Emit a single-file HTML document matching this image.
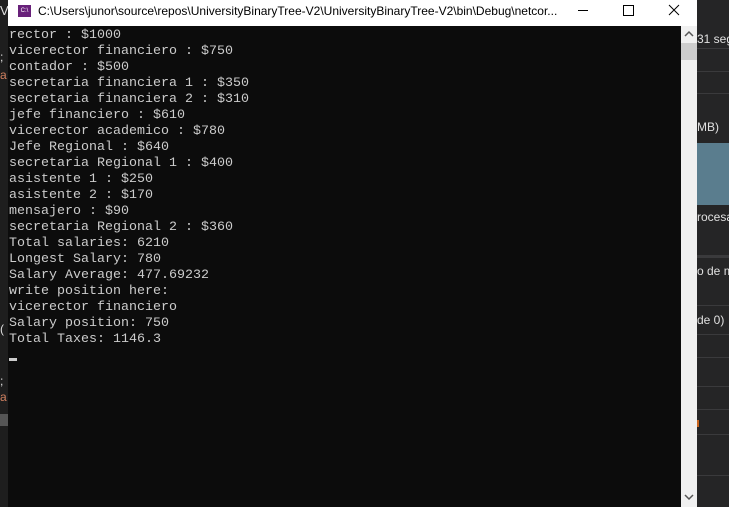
<!DOCTYPE html>
<html><head><style>
body{margin:0;width:729px;height:507px;overflow:hidden;background:#252526;position:relative;font-family:"Liberation Sans",sans-serif}
.abs{position:absolute}
.con{left:8px;top:26px;width:673px;height:481px;background:#0c0c0c}
pre{margin:0;position:absolute;left:1px;top:2px;font:13.33px/16px "Liberation Mono",monospace;color:#cccccc}
.rp{color:#e0e0e0;font-size:12px;white-space:nowrap}
.ln{background:#3a3a3c;height:1px;left:697px;width:32px}
.rpw{position:absolute;left:697px;top:0;width:32px;height:507px;overflow:hidden}
</style></head><body>
<div class="abs" style="left:0;top:0;width:8px;height:507px;background:#1e1e1e"></div>
<div class="abs" style="left:0;top:3px;color:#ddd;font-size:13px">V</div>
<div class="abs" style="left:0;top:50px;color:#ddd;font-size:12px">;</div>
<div class="abs" style="left:0;top:68px;color:#d08060;font-size:12px">a</div>
<div class="abs" style="left:0;top:322px;color:#ddd;font-size:12px">(</div>
<div class="abs" style="left:0;top:374px;color:#ddd;font-size:12px">;</div>
<div class="abs" style="left:0;top:390px;color:#d08060;font-size:12px">a</div>
<div class="abs" style="left:0;top:414px;width:8px;height:12px;background:#555"></div>
<div class="abs" style="left:8px;top:0;width:689px;height:26px;background:#fff"></div>
<div class="abs" style="left:18px;top:5px;width:13px;height:12px;background:#68217a;color:#fff;font-size:6px;line-height:12px;text-align:center">C:\</div>
<div class="abs" style="left:38px;top:4px;font-size:12px;color:#000;white-space:nowrap">C:\Users\junor\source\repos\UniversityBinaryTree-V2\UniversityBinaryTree-V2\bin\Debug\netcor...</div>
<div class="abs" style="left:578px;top:10px;width:10px;height:1px;background:#000"></div>
<div class="abs" style="left:623px;top:5px;width:9px;height:9px;border:1px solid #000"></div>
<svg class="abs" style="left:668px;top:4px" width="12" height="12"><path d="M1 1L11 11M11 1L1 11" stroke="#000" stroke-width="1"/></svg>
<div class="abs con"><pre>rector : $1000
vicerector financiero : $750
contador : $500
secretaria financiera 1 : $350
secretaria financiera 2 : $310
jefe financiero : $610
vicerector academico : $780
Jefe Regional : $640
secretaria Regional 1 : $400
asistente 1 : $250
asistente 2 : $170
mensajero : $90
secretaria Regional 2 : $360
Total salaries: 6210
Longest Salary: 780
Salary Average: 477.69232
write position here:
vicerector financiero
Salary position: 750
Total Taxes: 1146.3</pre>
<div class="abs" style="left:1px;top:332px;width:8px;height:3px;background:#ccc"></div></div>
<div class="abs" style="left:681px;top:26px;width:16px;height:481px;background:#f0f0f0"></div>
<div class="abs" style="left:681px;top:43px;width:16px;height:17px;background:#cdcdcd"></div>
<svg class="abs" style="left:684px;top:30px" width="10" height="8"><path d="M1 6L5 2L9 6" stroke="#555" fill="none" stroke-width="1.5"/></svg>
<svg class="abs" style="left:684px;top:493px" width="10" height="8"><path d="M1 2L5 6L9 2" stroke="#555" fill="none" stroke-width="1.5"/></svg>
<div class="rpw">
<div class="abs rp" style="left:0;top:32px">31 seg</div>
<div class="abs rp" style="left:0;top:120px">MB)</div>
<div class="abs rp" style="left:0;top:210px">rocesa</div>
<div class="abs rp" style="left:0;top:264px">o de m</div>
<div class="abs rp" style="left:0;top:313px">de 0)</div>
</div>
<div class="abs ln" style="top:48px"></div><div class="abs ln" style="top:71px"></div><div class="abs ln" style="top:93px"></div>
<div class="abs" style="left:697px;top:143px;width:32px;height:62px;background:#5a7d8e"></div>
<div class="abs" style="left:697px;top:255px;width:32px;height:3px;background:#3a3a3c"></div>
<div class="abs ln" style="top:305px"></div>
<div class="abs ln" style="top:334px"></div><div class="abs ln" style="top:357px"></div><div class="abs ln" style="top:386px"></div><div class="abs ln" style="top:409px"></div>
<div class="abs" style="left:697px;top:420px;width:2px;height:7px;background:#c8641e"></div>
<div class="abs ln" style="top:434px"></div><div class="abs ln" style="top:475px"></div>
</body></html>
